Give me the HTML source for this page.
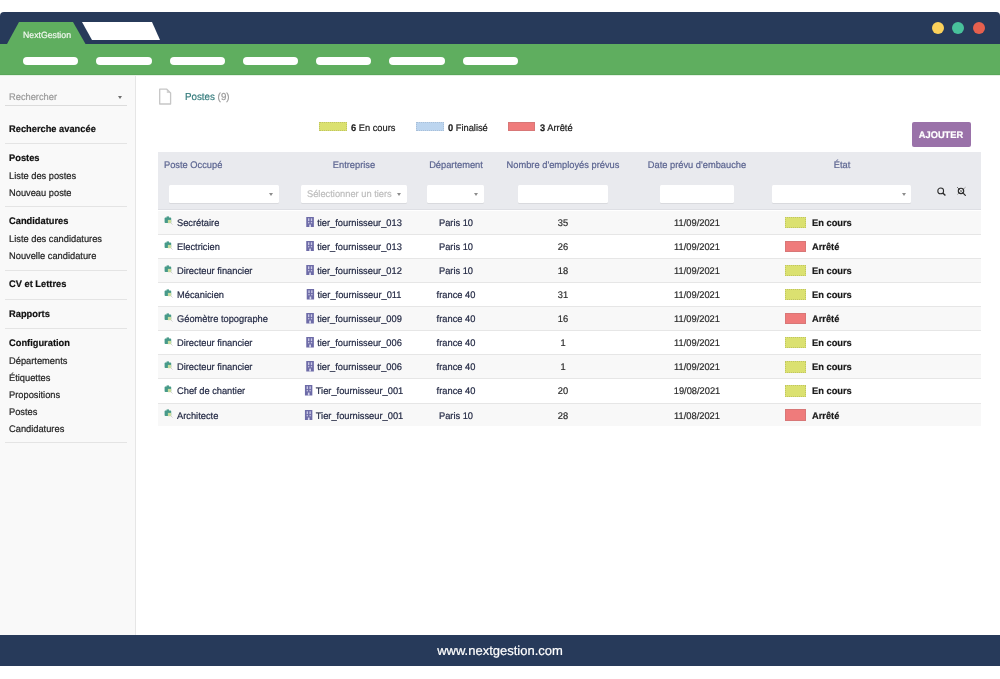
<!DOCTYPE html>
<html><head><meta charset="utf-8">
<style>
*{margin:0;padding:0;box-sizing:border-box}
body{will-change:transform;text-rendering:geometricPrecision;-webkit-text-stroke:0.2px currentColor}
html,body{width:1000px;height:679px;overflow:hidden;background:#fff;font-family:"Liberation Sans",sans-serif;}
.a{position:absolute;white-space:nowrap}
.t{position:absolute;white-space:nowrap;font-size:9.6px;line-height:12px;transform-origin:0 50%;transform:scaleX(0.9688)}
.tc{position:absolute;white-space:nowrap;font-size:9.6px;line-height:12px;transform-origin:50% 50%;transform:translateX(-50%) scaleX(0.9688)}
#nav{position:absolute;left:0;top:12px;width:1000px;height:33px;background:#273a5a;border-radius:4px 4px 0 0}
#green{position:absolute;left:0;top:44px;width:1000px;height:31px;background:#5fae5f}
.pill{position:absolute;top:57px;width:55px;height:8px;border-radius:4px;background:#fff}
.dot{position:absolute;top:21.6px;width:12px;height:12px;border-radius:50%}
#side{position:absolute;left:0;top:75px;width:136px;height:560px;background:#f9f9f9;border-right:1px solid #e6e6e6}
.st{left:9.5px;color:#222}
.sb{font-weight:bold;color:#111}
.div{position:absolute;left:5px;width:122px;height:1px;background:#e4e4e4}
#foot{position:absolute;left:0;top:635px;width:1000px;height:31px;background:#273a5a}
.hl{top:159px;color:#5b6490}
.inp{position:absolute;top:184.7px;height:18.4px;background:#fff;border-radius:1.5px;box-shadow:0 1px 0.5px #d9dade}
.arr{position:absolute;width:0;height:0;border-left:2.7px solid transparent;border-right:2.7px solid transparent;border-top:3.4px solid #8c8c8c}
.row{position:absolute;left:158px;width:823px;border-bottom:1px solid #e6e6e6}
.c{color:#232944}
.sw{position:absolute;width:21px;height:11px}
.et{left:811.5px;font-weight:bold;color:#1a1a1a}
</style></head><body>
<div id="nav"></div>
<div id="green"></div>
<svg class="a" style="left:0;top:0" width="200" height="50"><polygon points="7,44 19,22 73,22 85.5,44" fill="#5fae5f"/><polygon points="82,22 152,22 160,40 92,40" fill="#fff"/></svg>
<div class="t " style="left:22.8px;top:28.50px;font-size:9px;color:#f2f8f0">NextGestion</div>
<div class="pill" style="left:23.00px;width:55.4px"></div>
<div class="pill" style="left:96.25px;width:55.4px"></div>
<div class="pill" style="left:169.50px;width:55.4px"></div>
<div class="pill" style="left:242.75px;width:55.4px"></div>
<div class="pill" style="left:316.00px;width:55.4px"></div>
<div class="pill" style="left:389.25px;width:55.4px"></div>
<div class="pill" style="left:462.50px;width:55.4px"></div>
<div class="dot" style="left:932px;background:#fbd15b"></div>
<div class="dot" style="left:952.3px;background:#48c19b"></div>
<div class="dot" style="left:973.2px;background:#e6604e"></div>
<div id="side"></div>
<div class="a" style="left:0;top:74px;width:1000px;height:1px;background:#59a659"></div>
<div class="a" style="left:0;top:75px;width:1000px;height:1px;background:#e4f1e4"></div>
<div class="t st" style="left:9.0px;top:91.60px;color:#9a9a9a">Rechercher</div>
<div class="arr" style="left:117.8px;top:95.8px;border-top-color:#6f6f6f;border-top-width:3.2px;border-left-width:2.6px;border-right-width:2.6px"></div>
<div class="div" style="top:105px;background:#dcdcdc"></div>
<div class="t st sb" style="left:9.0px;top:124.00px;">Recherche avancée</div>
<div class="t st sb" style="left:9.0px;top:152.90px;">Postes</div>
<div class="t st" style="left:9.0px;top:170.60px;">Liste des postes</div>
<div class="t st" style="left:9.0px;top:187.90px;">Nouveau poste</div>
<div class="t st sb" style="left:9.0px;top:216.00px;">Candidatures</div>
<div class="t st" style="left:9.0px;top:234.40px;">Liste des candidatures</div>
<div class="t st" style="left:9.0px;top:250.90px;">Nouvelle candidature</div>
<div class="t st sb" style="left:9.0px;top:279.40px;">CV et Lettres</div>
<div class="t st sb" style="left:9.0px;top:308.80px;">Rapports</div>
<div class="t st sb" style="left:9.0px;top:338.10px;">Configuration</div>
<div class="t st" style="left:9.0px;top:356.40px;">Départements</div>
<div class="t st" style="left:9.0px;top:373.10px;">Étiquettes</div>
<div class="t st" style="left:9.0px;top:390.40px;">Propositions</div>
<div class="t st" style="left:9.0px;top:407.40px;">Postes</div>
<div class="t st" style="left:9.0px;top:424.10px;">Candidatures</div>
<div class="div" style="top:142.5px"></div>
<div class="div" style="top:206.0px"></div>
<div class="div" style="top:269.5px"></div>
<div class="div" style="top:298.9px"></div>
<div class="div" style="top:328.0px"></div>
<div class="div" style="top:441.8px"></div>
<svg class="a" style="left:157px;top:87px" width="16" height="20"><path d="M9.8 2.2 L13.6 6 H9.8 Z" fill="#d6d6d6"/><path d="M2.7 2.2 H9.8 L13.6 6 V17 H2.7 Z" fill="none" stroke="#c6c6c6" stroke-width="1.3" stroke-linejoin="round"/></svg>
<div class="t " style="left:185px;top:91.70px;font-size:10.1px;color:#357c7d">Postes <span style="color:#999">(9)</span></div>
<div class="sw" style="left:319px;top:122.2px;width:28px;height:8.6px;background:#dbe170;border:1px dotted #bfc463"></div>
<div class="t " style="left:351.3px;top:123.30px;color:#1a1a1a"><b>6</b> En cours</div>
<div class="sw" style="left:415.5px;top:122.2px;width:28px;height:8.6px;background:#bcd5ef;border:1px dotted #a9bfd8"></div>
<div class="t " style="left:448.0px;top:123.30px;color:#1a1a1a"><b>0</b> Finalisé</div>
<div class="sw" style="left:508px;top:122.2px;width:27px;height:8.6px;background:#ef7b7b;border:1px solid #d87777"></div>
<div class="t " style="left:539.5px;top:123.30px;color:#1a1a1a"><b>3</b> Arrêté</div>
<div class="a" style="left:912px;top:122px;width:59px;height:25px;background:#9a72a9;border-radius:2px"></div>
<div class="tc " style="left:941.1px;top:130.00px;color:#fff;font-weight:bold">AJOUTER</div>
<div class="a" style="left:158px;top:152.2px;width:823px;height:58.3px;background:#e9eaee;border-bottom:1px solid #dedfe4"></div>
<div class="t hl" style="left:163.6px;top:159.60px;">Poste Occupé</div>
<div class="tc hl" style="left:354px;top:159.60px;">Entreprise</div>
<div class="tc hl" style="left:455.7px;top:159.60px;">Département</div>
<div class="tc hl" style="left:563.4px;top:159.60px;">Nombre d'employés prévus</div>
<div class="tc hl" style="left:697px;top:159.60px;">Date prévu d'embauche</div>
<div class="tc hl" style="left:842px;top:159.60px;">État</div>
<div class="inp" style="left:169px;width:109.7px"></div>
<div class="arr" style="left:268.7px;top:192.6px"></div>
<div class="inp" style="left:301px;width:106.0px"></div>
<div class="arr" style="left:397.2px;top:192.6px"></div>
<div class="inp" style="left:426.6px;width:57.4px"></div>
<div class="arr" style="left:474.2px;top:192.6px"></div>
<div class="inp" style="left:518px;width:90.0px"></div>
<div class="inp" style="left:660px;width:73.6px"></div>
<div class="inp" style="left:772px;width:139.0px"></div>
<div class="arr" style="left:901.7px;top:192.6px"></div>
<div class="t " style="left:307px;top:188.70px;color:#bdbdbd">Sélectionner un tiers</div>
<svg class="a" style="left:934px;top:184px" width="36" height="16"><circle cx="6.7" cy="6.9" r="2.9" fill="none" stroke="#2a2a2a" stroke-width="1.05"/><line x1="8.8" y1="9" x2="11.4" y2="11.6" stroke="#2a2a2a" stroke-width="1.35"/><line x1="23" y1="3" x2="31.8" y2="11.8" stroke="#444" stroke-width="0.7"/><line x1="31.6" y1="3.2" x2="23.2" y2="10.6" stroke="#666" stroke-width="0.55"/><circle cx="27" cy="6.9" r="2.7" fill="none" stroke="#2a2a2a" stroke-width="1.15"/><circle cx="27" cy="6.9" r="0.9" fill="#999"/><line x1="29.4" y1="9.3" x2="31.6" y2="11.6" stroke="#2a2a2a" stroke-width="1.2"/></svg>
<div class="row" style="top:210.5px;height:24.8px;background:#f8f8f8;"></div>
<svg class="a" style="left:163.5px;top:216.4px" width="10" height="10"><rect x="2.6" y="0.4" width="2.4" height="1.6" fill="#4f9d8c"/><rect x="0.6" y="1.6" width="6.6" height="5.4" rx="0.8" fill="#479a89"/><rect x="3.9" y="3.9" width="3.2" height="3.3" fill="#cadd9f"/><line x1="6.8" y1="6.8" x2="8.6" y2="8.6" stroke="#bbb" stroke-width="0.6"/></svg>
<div class="t c" style="left:177px;top:217.70px;">Secrétaire</div>
<div class="tc c" style="left:354px;top:216.70px"><svg width="8.17" height="10.5" viewBox="0 0 7.6 9.7" preserveAspectRatio="none" style="vertical-align:-1.5px;margin-right:3.2px"><rect x="0" y="0" width="7.6" height="9.7" fill="#6d6ba7"/><rect x="1.8" y="1.2" width="1.3" height="2.6" fill="#c9c8e6"/><rect x="4.5" y="1.2" width="1.3" height="2.6" fill="#c9c8e6"/><rect x="1.8" y="4.8" width="1.3" height="1" fill="#d9d8ee"/><rect x="4.5" y="4.8" width="1.3" height="1" fill="#d9d8ee"/><rect x="3" y="7" width="1.6" height="2.7" fill="#d9d8ee"/></svg>tier_fournisseur_013</div>
<div class="tc c" style="left:455.5px;top:217.70px;">Paris 10</div>
<div class="tc c" style="left:563px;top:217.70px;color:#2c2c2c">35</div>
<div class="tc c" style="left:697px;top:217.70px;color:#2c2c2c">11/09/2021</div>
<div class="sw" style="left:785.3px;top:216.5px;width:20.9px;height:11.4px;background:#dbe170;border:1px dotted #bfc463"></div>
<div class="t et" style="left:811.5px;top:217.70px;">En cours</div>
<div class="row" style="top:235.3px;height:23.5px;background:#fff;"></div>
<svg class="a" style="left:163.5px;top:240.5px" width="10" height="10"><rect x="2.6" y="0.4" width="2.4" height="1.6" fill="#4f9d8c"/><rect x="0.6" y="1.6" width="6.6" height="5.4" rx="0.8" fill="#479a89"/><rect x="3.9" y="3.9" width="3.2" height="3.3" fill="#cadd9f"/><line x1="6.8" y1="6.8" x2="8.6" y2="8.6" stroke="#bbb" stroke-width="0.6"/></svg>
<div class="t c" style="left:177px;top:241.81px;">Electricien</div>
<div class="tc c" style="left:354px;top:240.81px"><svg width="8.17" height="10.5" viewBox="0 0 7.6 9.7" preserveAspectRatio="none" style="vertical-align:-1.5px;margin-right:3.2px"><rect x="0" y="0" width="7.6" height="9.7" fill="#6d6ba7"/><rect x="1.8" y="1.2" width="1.3" height="2.6" fill="#c9c8e6"/><rect x="4.5" y="1.2" width="1.3" height="2.6" fill="#c9c8e6"/><rect x="1.8" y="4.8" width="1.3" height="1" fill="#d9d8ee"/><rect x="4.5" y="4.8" width="1.3" height="1" fill="#d9d8ee"/><rect x="3" y="7" width="1.6" height="2.7" fill="#d9d8ee"/></svg>tier_fournisseur_013</div>
<div class="tc c" style="left:455.5px;top:241.81px;">Paris 10</div>
<div class="tc c" style="left:563px;top:241.81px;color:#2c2c2c">26</div>
<div class="tc c" style="left:697px;top:241.81px;color:#2c2c2c">11/09/2021</div>
<div class="sw" style="left:785.3px;top:240.6px;width:20.9px;height:11.4px;background:#ef7b7b;border:1px solid #d87777"></div>
<div class="t et" style="left:811.5px;top:241.81px;">Arrêté</div>
<div class="row" style="top:258.8px;height:23.9px;background:#f8f8f8;"></div>
<svg class="a" style="left:163.5px;top:264.6px" width="10" height="10"><rect x="2.6" y="0.4" width="2.4" height="1.6" fill="#4f9d8c"/><rect x="0.6" y="1.6" width="6.6" height="5.4" rx="0.8" fill="#479a89"/><rect x="3.9" y="3.9" width="3.2" height="3.3" fill="#cadd9f"/><line x1="6.8" y1="6.8" x2="8.6" y2="8.6" stroke="#bbb" stroke-width="0.6"/></svg>
<div class="t c" style="left:177px;top:265.92px;">Directeur financier</div>
<div class="tc c" style="left:354px;top:264.92px"><svg width="8.17" height="10.5" viewBox="0 0 7.6 9.7" preserveAspectRatio="none" style="vertical-align:-1.5px;margin-right:3.2px"><rect x="0" y="0" width="7.6" height="9.7" fill="#6d6ba7"/><rect x="1.8" y="1.2" width="1.3" height="2.6" fill="#c9c8e6"/><rect x="4.5" y="1.2" width="1.3" height="2.6" fill="#c9c8e6"/><rect x="1.8" y="4.8" width="1.3" height="1" fill="#d9d8ee"/><rect x="4.5" y="4.8" width="1.3" height="1" fill="#d9d8ee"/><rect x="3" y="7" width="1.6" height="2.7" fill="#d9d8ee"/></svg>tier_fournisseur_012</div>
<div class="tc c" style="left:455.5px;top:265.92px;">Paris 10</div>
<div class="tc c" style="left:563px;top:265.92px;color:#2c2c2c">18</div>
<div class="tc c" style="left:697px;top:265.92px;color:#2c2c2c">11/09/2021</div>
<div class="sw" style="left:785.3px;top:264.7px;width:20.9px;height:11.4px;background:#dbe170;border:1px dotted #bfc463"></div>
<div class="t et" style="left:811.5px;top:265.92px;">En cours</div>
<div class="row" style="top:282.7px;height:23.9px;background:#fff;"></div>
<svg class="a" style="left:163.5px;top:288.7px" width="10" height="10"><rect x="2.6" y="0.4" width="2.4" height="1.6" fill="#4f9d8c"/><rect x="0.6" y="1.6" width="6.6" height="5.4" rx="0.8" fill="#479a89"/><rect x="3.9" y="3.9" width="3.2" height="3.3" fill="#cadd9f"/><line x1="6.8" y1="6.8" x2="8.6" y2="8.6" stroke="#bbb" stroke-width="0.6"/></svg>
<div class="t c" style="left:177px;top:290.03px;">Mécanicien</div>
<div class="tc c" style="left:354px;top:289.03px"><svg width="8.17" height="10.5" viewBox="0 0 7.6 9.7" preserveAspectRatio="none" style="vertical-align:-1.5px;margin-right:3.2px"><rect x="0" y="0" width="7.6" height="9.7" fill="#6d6ba7"/><rect x="1.8" y="1.2" width="1.3" height="2.6" fill="#c9c8e6"/><rect x="4.5" y="1.2" width="1.3" height="2.6" fill="#c9c8e6"/><rect x="1.8" y="4.8" width="1.3" height="1" fill="#d9d8ee"/><rect x="4.5" y="4.8" width="1.3" height="1" fill="#d9d8ee"/><rect x="3" y="7" width="1.6" height="2.7" fill="#d9d8ee"/></svg>tier_fournisseur_011</div>
<div class="tc c" style="left:455.5px;top:290.03px;">france 40</div>
<div class="tc c" style="left:563px;top:290.03px;color:#2c2c2c">31</div>
<div class="tc c" style="left:697px;top:290.03px;color:#2c2c2c">11/09/2021</div>
<div class="sw" style="left:785.3px;top:288.8px;width:20.9px;height:11.4px;background:#dbe170;border:1px dotted #bfc463"></div>
<div class="t et" style="left:811.5px;top:290.03px;">En cours</div>
<div class="row" style="top:306.6px;height:24.0px;background:#f8f8f8;"></div>
<svg class="a" style="left:163.5px;top:312.8px" width="10" height="10"><rect x="2.6" y="0.4" width="2.4" height="1.6" fill="#4f9d8c"/><rect x="0.6" y="1.6" width="6.6" height="5.4" rx="0.8" fill="#479a89"/><rect x="3.9" y="3.9" width="3.2" height="3.3" fill="#cadd9f"/><line x1="6.8" y1="6.8" x2="8.6" y2="8.6" stroke="#bbb" stroke-width="0.6"/></svg>
<div class="t c" style="left:177px;top:314.14px;">Géomètre topographe</div>
<div class="tc c" style="left:354px;top:313.14px"><svg width="8.17" height="10.5" viewBox="0 0 7.6 9.7" preserveAspectRatio="none" style="vertical-align:-1.5px;margin-right:3.2px"><rect x="0" y="0" width="7.6" height="9.7" fill="#6d6ba7"/><rect x="1.8" y="1.2" width="1.3" height="2.6" fill="#c9c8e6"/><rect x="4.5" y="1.2" width="1.3" height="2.6" fill="#c9c8e6"/><rect x="1.8" y="4.8" width="1.3" height="1" fill="#d9d8ee"/><rect x="4.5" y="4.8" width="1.3" height="1" fill="#d9d8ee"/><rect x="3" y="7" width="1.6" height="2.7" fill="#d9d8ee"/></svg>tier_fournisseur_009</div>
<div class="tc c" style="left:455.5px;top:314.14px;">france 40</div>
<div class="tc c" style="left:563px;top:314.14px;color:#2c2c2c">16</div>
<div class="tc c" style="left:697px;top:314.14px;color:#2c2c2c">11/09/2021</div>
<div class="sw" style="left:785.3px;top:312.9px;width:20.9px;height:11.4px;background:#ef7b7b;border:1px solid #d87777"></div>
<div class="t et" style="left:811.5px;top:314.14px;">Arrêté</div>
<div class="row" style="top:330.6px;height:24.1px;background:#fff;"></div>
<svg class="a" style="left:163.5px;top:336.9px" width="10" height="10"><rect x="2.6" y="0.4" width="2.4" height="1.6" fill="#4f9d8c"/><rect x="0.6" y="1.6" width="6.6" height="5.4" rx="0.8" fill="#479a89"/><rect x="3.9" y="3.9" width="3.2" height="3.3" fill="#cadd9f"/><line x1="6.8" y1="6.8" x2="8.6" y2="8.6" stroke="#bbb" stroke-width="0.6"/></svg>
<div class="t c" style="left:177px;top:338.25px;">Directeur financier</div>
<div class="tc c" style="left:354px;top:337.25px"><svg width="8.17" height="10.5" viewBox="0 0 7.6 9.7" preserveAspectRatio="none" style="vertical-align:-1.5px;margin-right:3.2px"><rect x="0" y="0" width="7.6" height="9.7" fill="#6d6ba7"/><rect x="1.8" y="1.2" width="1.3" height="2.6" fill="#c9c8e6"/><rect x="4.5" y="1.2" width="1.3" height="2.6" fill="#c9c8e6"/><rect x="1.8" y="4.8" width="1.3" height="1" fill="#d9d8ee"/><rect x="4.5" y="4.8" width="1.3" height="1" fill="#d9d8ee"/><rect x="3" y="7" width="1.6" height="2.7" fill="#d9d8ee"/></svg>tier_fournisseur_006</div>
<div class="tc c" style="left:455.5px;top:338.25px;">france 40</div>
<div class="tc c" style="left:563px;top:338.25px;color:#2c2c2c">1</div>
<div class="tc c" style="left:697px;top:338.25px;color:#2c2c2c">11/09/2021</div>
<div class="sw" style="left:785.3px;top:337.0px;width:20.9px;height:11.4px;background:#dbe170;border:1px dotted #bfc463"></div>
<div class="t et" style="left:811.5px;top:338.25px;">En cours</div>
<div class="row" style="top:354.7px;height:24.0px;background:#f8f8f8;"></div>
<svg class="a" style="left:163.5px;top:361.1px" width="10" height="10"><rect x="2.6" y="0.4" width="2.4" height="1.6" fill="#4f9d8c"/><rect x="0.6" y="1.6" width="6.6" height="5.4" rx="0.8" fill="#479a89"/><rect x="3.9" y="3.9" width="3.2" height="3.3" fill="#cadd9f"/><line x1="6.8" y1="6.8" x2="8.6" y2="8.6" stroke="#bbb" stroke-width="0.6"/></svg>
<div class="t c" style="left:177px;top:362.36px;">Directeur financier</div>
<div class="tc c" style="left:354px;top:361.36px"><svg width="8.17" height="10.5" viewBox="0 0 7.6 9.7" preserveAspectRatio="none" style="vertical-align:-1.5px;margin-right:3.2px"><rect x="0" y="0" width="7.6" height="9.7" fill="#6d6ba7"/><rect x="1.8" y="1.2" width="1.3" height="2.6" fill="#c9c8e6"/><rect x="4.5" y="1.2" width="1.3" height="2.6" fill="#c9c8e6"/><rect x="1.8" y="4.8" width="1.3" height="1" fill="#d9d8ee"/><rect x="4.5" y="4.8" width="1.3" height="1" fill="#d9d8ee"/><rect x="3" y="7" width="1.6" height="2.7" fill="#d9d8ee"/></svg>tier_fournisseur_006</div>
<div class="tc c" style="left:455.5px;top:362.36px;">france 40</div>
<div class="tc c" style="left:563px;top:362.36px;color:#2c2c2c">1</div>
<div class="tc c" style="left:697px;top:362.36px;color:#2c2c2c">11/09/2021</div>
<div class="sw" style="left:785.3px;top:361.2px;width:20.9px;height:11.4px;background:#dbe170;border:1px dotted #bfc463"></div>
<div class="t et" style="left:811.5px;top:362.36px;">En cours</div>
<div class="row" style="top:378.7px;height:24.9px;background:#fff;"></div>
<svg class="a" style="left:163.5px;top:385.2px" width="10" height="10"><rect x="2.6" y="0.4" width="2.4" height="1.6" fill="#4f9d8c"/><rect x="0.6" y="1.6" width="6.6" height="5.4" rx="0.8" fill="#479a89"/><rect x="3.9" y="3.9" width="3.2" height="3.3" fill="#cadd9f"/><line x1="6.8" y1="6.8" x2="8.6" y2="8.6" stroke="#bbb" stroke-width="0.6"/></svg>
<div class="t c" style="left:177px;top:386.47px;">Chef de chantier</div>
<div class="tc c" style="left:354px;top:385.47px"><svg width="8.17" height="10.5" viewBox="0 0 7.6 9.7" preserveAspectRatio="none" style="vertical-align:-1.5px;margin-right:3.2px"><rect x="0" y="0" width="7.6" height="9.7" fill="#6d6ba7"/><rect x="1.8" y="1.2" width="1.3" height="2.6" fill="#c9c8e6"/><rect x="4.5" y="1.2" width="1.3" height="2.6" fill="#c9c8e6"/><rect x="1.8" y="4.8" width="1.3" height="1" fill="#d9d8ee"/><rect x="4.5" y="4.8" width="1.3" height="1" fill="#d9d8ee"/><rect x="3" y="7" width="1.6" height="2.7" fill="#d9d8ee"/></svg>Tier_fournisseur_001</div>
<div class="tc c" style="left:455.5px;top:386.47px;">france 40</div>
<div class="tc c" style="left:563px;top:386.47px;color:#2c2c2c">20</div>
<div class="tc c" style="left:697px;top:386.47px;color:#2c2c2c">19/08/2021</div>
<div class="sw" style="left:785.3px;top:385.3px;width:20.9px;height:11.4px;background:#dbe170;border:1px dotted #bfc463"></div>
<div class="t et" style="left:811.5px;top:386.47px;">En cours</div>
<div class="row" style="top:403.6px;height:22.8px;background:#f8f8f8;border-bottom:none;"></div>
<svg class="a" style="left:163.5px;top:409.3px" width="10" height="10"><rect x="2.6" y="0.4" width="2.4" height="1.6" fill="#4f9d8c"/><rect x="0.6" y="1.6" width="6.6" height="5.4" rx="0.8" fill="#479a89"/><rect x="3.9" y="3.9" width="3.2" height="3.3" fill="#cadd9f"/><line x1="6.8" y1="6.8" x2="8.6" y2="8.6" stroke="#bbb" stroke-width="0.6"/></svg>
<div class="t c" style="left:177px;top:410.58px;">Architecte</div>
<div class="tc c" style="left:354px;top:409.58px"><svg width="8.17" height="10.5" viewBox="0 0 7.6 9.7" preserveAspectRatio="none" style="vertical-align:-1.5px;margin-right:3.2px"><rect x="0" y="0" width="7.6" height="9.7" fill="#6d6ba7"/><rect x="1.8" y="1.2" width="1.3" height="2.6" fill="#c9c8e6"/><rect x="4.5" y="1.2" width="1.3" height="2.6" fill="#c9c8e6"/><rect x="1.8" y="4.8" width="1.3" height="1" fill="#d9d8ee"/><rect x="4.5" y="4.8" width="1.3" height="1" fill="#d9d8ee"/><rect x="3" y="7" width="1.6" height="2.7" fill="#d9d8ee"/></svg>Tier_fournisseur_001</div>
<div class="tc c" style="left:455.5px;top:410.58px;">Paris 10</div>
<div class="tc c" style="left:563px;top:410.58px;color:#2c2c2c">28</div>
<div class="tc c" style="left:697px;top:410.58px;color:#2c2c2c">11/08/2021</div>
<div class="sw" style="left:785.3px;top:409.4px;width:20.9px;height:11.4px;background:#ef7b7b;border:1px solid #d87777"></div>
<div class="t et" style="left:811.5px;top:410.58px;">Arrêté</div>
<div id="foot"></div>
<div class="a" style="left:500px;top:643.6px;font-size:13px;line-height:14px;color:#fff;transform:translateX(-50%)">www.nextgestion.com</div>
</body></html>
